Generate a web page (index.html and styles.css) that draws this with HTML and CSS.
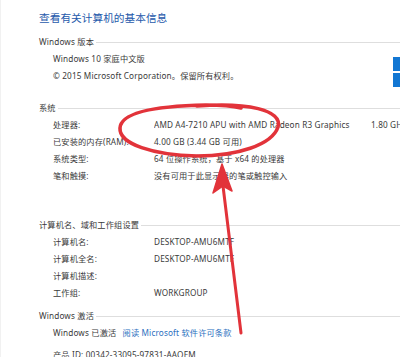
FILE: index.html
```html
<!DOCTYPE html>
<html lang="zh-CN">
<head>
<meta charset="utf-8">
<link rel="stylesheet" href="styles.css">
</head>
<body>
<div class="page">
  <h1 class="title">查看有关计算机的基本信息</h1>

  <section class="sec sec-edition">
    <div class="sec-head"><span>Windows 版本</span><i class="rule"></i></div>
    <div class="edition">
      <div class="edition-text">
        <div class="row-plain">Windows 10 家庭中文版</div>
        <div class="row-plain">© 2015 Microsoft Corporation。保留所有权利。</div>
      </div>
      <div class="logo">
        <span class="pane"></span>
        <span class="pane"></span>
      </div>
    </div>
  </section>

  <section class="sec sec-system">
    <div class="sec-head"><span>系统</span><i class="rule"></i></div>
    <div class="grid">
      <div class="lbl">处理器:</div><div class="val val-cpu"><span class="cpu">AMD A4-7210 APU with AMD Radeon R3 Graphics</span><span class="ghz">1.80 GHz</span></div>
      <div class="lbl">已安装的内存(RAM):</div><div class="val">4.00 GB (3.44 GB 可用)</div>
      <div class="lbl">系统类型:</div><div class="val">64 位操作系统，基于 x64 的处理器</div>
      <div class="lbl">笔和触摸:</div><div class="val">没有可用于此显示器的笔或触控输入</div>
    </div>
  </section>

  <section class="sec sec-name">
    <div class="sec-head"><span>计算机名、域和工作组设置</span><i class="rule"></i></div>
    <div class="grid">
      <div class="lbl">计算机名:</div><div class="val">DESKTOP-AMU6MTF</div>
      <div class="lbl">计算机全名:</div><div class="val">DESKTOP-AMU6MTF</div>
      <div class="lbl">计算机描述:</div><div class="val"></div>
      <div class="lbl">工作组:</div><div class="val">WORKGROUP</div>
    </div>
  </section>

  <section class="sec sec-act">
    <div class="sec-head"><span>Windows 激活</span><i class="rule"></i></div>
    <div class="row-plain">Windows 已激活 <a class="link">阅读 Microsoft 软件许可条款</a></div>
    <div class="row-plain row-id">产品 ID: 00342-33095-97831-AAOEM</div>
  </section>

  <svg class="mark" width="400" height="357" viewBox="0 0 400 357" aria-hidden="true">
    <path d="M196 106 C246 102 282 110 277 127 C271 145 236 156 196 156 C152 155 118 144 119 128 C120 113 152 106 205 105 C220 105 232 106 240 108"
          fill="none" stroke="#e2333a" stroke-width="3.6" stroke-linecap="round"/>
    <path d="M222 186 L240 333" fill="none" stroke="#e2333a" stroke-width="3" stroke-linecap="round"/>
    <path d="M221 164 L231 191 L222 186 L212 193 Z" fill="#e2333a" stroke="#e2333a" stroke-width="1.5" stroke-linejoin="round"/>
  </svg>
</div>
</body>
</html>
```

FILE: styles.css
```css
* { box-sizing: border-box; }
html, body { margin: 0; padding: 0; background: #fff; }
body {
  width: 400px;
  height: 357px;
  overflow: hidden;
  font-family: "Noto Sans", "Noto Sans CJK SC", sans-serif;
  font-size: 8.2px;
  letter-spacing: 0.15px;
  color: #3a3a3a;
}
.page {
  position: relative;
  width: 400px;
  height: 357px;
  padding: 8px 0 0 38px;
  border-left: 1px solid #f1f1f1;
  white-space: nowrap;
}
.title {
  margin: 0;
  height: 20px;
  line-height: 20px;
  font-size: 10.7px;
  letter-spacing: 0;
  font-weight: normal;
  color: #1f5aab;
}
.sec-head {
  display: flex;
  align-items: center;
  gap: 2px;
  height: 17px;
  line-height: 17px;
}
.rule {
  flex: 1;
  height: 1px;
  background: #dedede;
  margin-top: 1px;
}
.sec-edition { margin-top: 5px; }
.sec-system { margin-top: 12px; }
.sec-name { margin-top: 32px; }
.sec-act { margin-top: 6px; }

.row-plain {
  height: 17px;
  line-height: 17px;
  padding-left: 14px;
}
.row-id { margin-top: 5px; }

.edition { display: flex; }
.edition-text { flex: 1; }
.logo {
  width: 30px;
  margin-right: -23px;
  margin-top: 7px;
  display: flex;
  flex-direction: column;
  gap: 2px;
}
.pane {
  display: block;
  height: 14px;
  background: #1277d3;
}

.grid {
  display: grid;
  grid-template-columns: 101px 1fr;
  grid-auto-rows: 17px;
  line-height: 17px;
  padding-left: 14px;
}
.val-cpu { display: flex; }
.cpu { width: 217px; overflow: hidden; }
.link { color: #2a6fc0; margin-left: 4px; }

.mark {
  position: absolute;
  left: 0;
  top: 0;
  pointer-events: none;
}
```
